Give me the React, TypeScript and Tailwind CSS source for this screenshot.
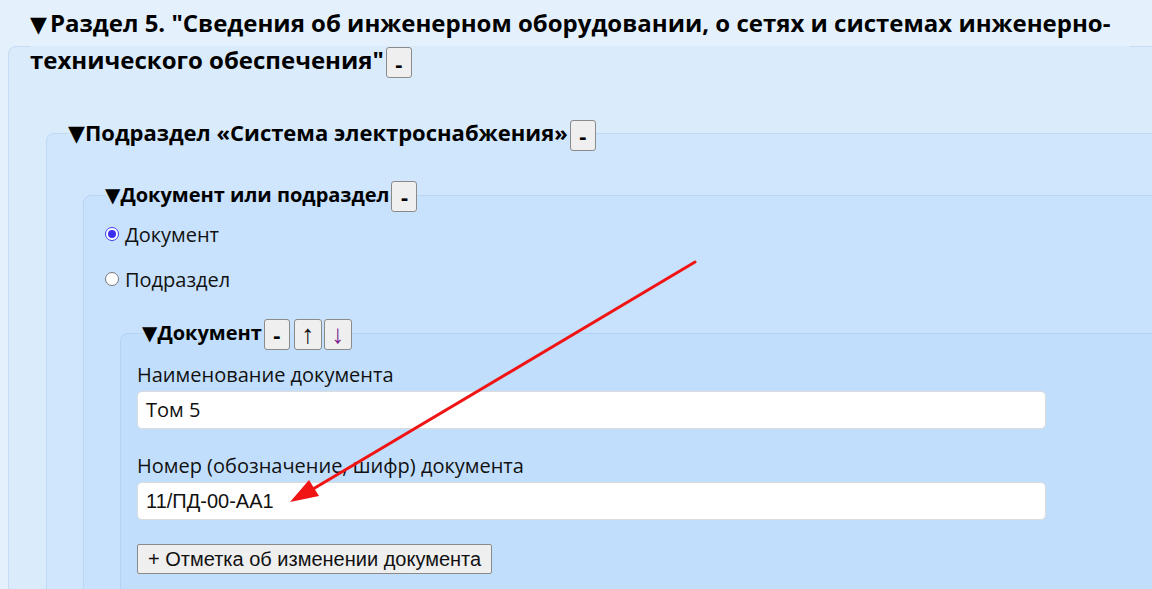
const sans = "font-['Open_Sans',sans-serif]";

const Tri = ({ className = "" }: { className?: string }) => (
  <span className={`font-['DejaVu_Sans',sans-serif] ${className}`}>▼</span>
);

const SmallButton = ({ children, className = "" }: { children: React.ReactNode; className?: string }) => (
  <button
    className={`ml-[2px] inline-flex h-[31px] w-[26px] items-center justify-center rounded-[3px] border border-[#8a8a8a] bg-[#efefef] align-middle text-[22px] leading-none ${className}`}
  >
    {children}
  </button>
);

const Radio = ({ checked, label }: { checked?: boolean; label: string }) => (
  <label className="flex items-center gap-[6px] text-[20px] leading-[27px] text-[#111]">
    <span
      className={`ml-[5px] flex size-[14px] items-center justify-center rounded-full border bg-white ${
        checked ? "border-[#3d3df5]" : "border-[#767676]"
      }`}
    >
      {checked && <span className="size-[8px] rounded-full bg-[#3d2ff0]" />}
    </span>
    {label}
  </label>
);

const Field = ({ label, value, mono }: { label: string; value: string; mono?: boolean }) => (
  <div className="flex flex-col">
    <span className="text-[20px] leading-[27px] text-[#111]">{label}</span>
    <div
      className={`mt-[3px] flex h-[38px] w-[909px] items-center rounded-[5px] border border-[#dcdcdc] bg-white px-[8px] text-[20px] text-[#111] ${
        mono ? "font-['Liberation_Sans',sans-serif]" : ""
      }`}
    >
      {value}
    </div>
  </div>
);

export default function App() {
  return (
    <div className={`relative h-[589px] w-[1152px] overflow-hidden bg-[#e4f1fd] ${sans}`}>
      <div className="w-[1400px] pl-2 pt-2">
        <fieldset className="w-[1320px] rounded-lg border border-[#c4dcf4] bg-[#daebfc] pb-10 pl-[16px]">
          <legend className="ml-[5px] w-[1100px] text-[24px] font-bold leading-[30px] text-black">
            <span className="text-[22px]">
              <Tri className="mr-[3px]" />
            </span>
            Раздел 5. "Сведения об инженерном оборудовании, о сетях и системах инженерно-технического обеспечения"
            <SmallButton className="my-[7px]">-</SmallButton>
          </legend>

          <fieldset className="mt-[32px] ml-[21px] rounded-lg border border-[#bfd9f4] bg-[#d0e6fc] pb-10 pl-[16px]">
            <legend className="ml-[5px] text-[22px] font-bold leading-[30px] text-black">
              <Tri />
              Подраздел «Система электроснабжения»
              <SmallButton>-</SmallButton>
            </legend>

            <fieldset className="mt-[29px] ml-[20px] rounded-lg border border-[#b9d6f3] bg-[#c8e2fd] pb-10 pl-[16px]">
              <legend className="ml-[5px] text-[20px] font-bold leading-[30px] text-black">
                <Tri />
                Документ или подраздел
                <SmallButton>-</SmallButton>
              </legend>

              <div className="mt-[9px] flex flex-col gap-[18px]">
                <Radio checked label="Документ" />
                <Radio label="Подраздел" />
              </div>

              <fieldset className="mt-[25px] ml-[20px] rounded-lg border border-[#b3d3f4] bg-[#c1dffd] pb-10 pl-[16px]">
                <legend className="ml-[5px] text-[20px] font-bold leading-[30px] text-black">
                  <Tri />
                  Документ
                  <SmallButton>-</SmallButton>
                  <SmallButton className="ml-[4px] w-[28px] font-['Liberation_Sans',sans-serif] text-[26px] font-normal text-[#111]">
                    ↑
                  </SmallButton>
                  <SmallButton className="w-[28px] font-['Liberation_Sans',sans-serif] text-[26px] font-normal text-[#7a1b8c]">
                    ↓
                  </SmallButton>
                </legend>

                <div className="mt-[11px] flex flex-col gap-[23px]">
                  <Field label="Наименование документа" value="Том 5" />
                  <Field label="Номер (обозначение, шифр) документа" value="11/ПД-00-АА1" mono />
                </div>

                <button className="mt-[24px] h-[30px] rounded-[2px] border border-[#8a8a8a] bg-[#efefef] px-[10px] font-['Liberation_Sans',sans-serif] text-[20px] leading-none text-[#111]">
                  + Отметка об изменении документа
                </button>
              </fieldset>
            </fieldset>
          </fieldset>
        </fieldset>
      </div>

      <svg className="pointer-events-none absolute left-0 top-0" width="1152" height="589">
        <line x1="695" y1="262" x2="308" y2="492" stroke="#f01414" strokeWidth="3" strokeLinecap="round" />
        <polygon points="290,502 309,480 319,496" fill="#f01414" />
      </svg>
    </div>
  );
}
